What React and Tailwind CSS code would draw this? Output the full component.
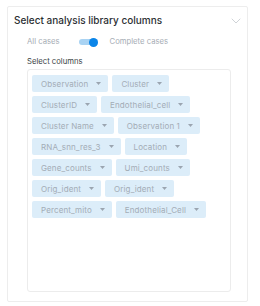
import React from "react"

const columns = [
  "Observation", "Cluster",
  "ClusterID", "Endothelial_cell",
  "Cluster Name", "Observation 1",
  "RNA_snn_res_3", "Location",
  "Gene_counts", "Umi_counts",
  "Orig_ident", "Orig_ident",
  "Percent_mito", "Endothelial_Cell",
]

function Chip({ label }) {
  return (
    <div className="h-[17px] flex items-center pl-[9px] pr-[7px] bg-[#dcedf9] rounded-[2px] text-[8px] tracking-[0.12px] text-[#a3acb6]">
      <span>{label}</span>
      <svg width="5" height="3" viewBox="0 0 5 3" className="ml-[8px]">
        <polygon points="0,0 5,0 2.5,3" fill="#9ba5b0" />
      </svg>
    </div>
  )
}

export default function App() {
  return (
    <div className="w-[260px] h-[306px] bg-white pt-[6px] pl-[7px]" style={{ fontFamily: "Inter, 'Noto Sans', sans-serif" }}>
      <div className="w-[241px] h-[296px] border border-[#ededed] rounded-[2px] flex flex-col">
        <div className="flex items-center justify-between pl-[6px] pr-[6px] pt-[4px] h-[23px]">
          <p className="text-[10px] font-medium text-[#2b2f33]">Select analysis library columns</p>
          <svg width="10" height="6" viewBox="0 0 10 6" fill="none" stroke="#cfd3d7" strokeWidth="1" strokeLinecap="round">
            <polyline points="1,1 5,5 9,1" />
          </svg>
        </div>

        <div className="flex items-center pl-[19px] mt-[6px] h-[12px] text-[7.7px] text-[#a6adb5]">
          <span>All cases</span>
          <div className="relative ml-[19px] w-[19px] h-[6px] rounded-full bg-[#a9d3f3]">
            <div className="absolute right-[0px] top-[-1.5px] w-[9px] h-[9px] rounded-full bg-[#0b85e8]" />
          </div>
          <span className="ml-[12px]">Complete cases</span>
        </div>

        <p className="pl-[19px] mt-[9px] text-[7.7px] text-[#3a3f45] leading-[10px]">Select columns</p>

        <div className="ml-[19px] mr-[16px] mt-[2px] mb-[9px] flex-1 border border-[#ececec] rounded-[3px] pt-[5px] pl-[4px] pr-[4px]">
          <div className="flex flex-wrap gap-x-[4px] gap-y-[4px]">
            {columns.map((c, i) => (
              <Chip key={i} label={c} />
            ))}
          </div>
        </div>
      </div>
    </div>
  )
}
